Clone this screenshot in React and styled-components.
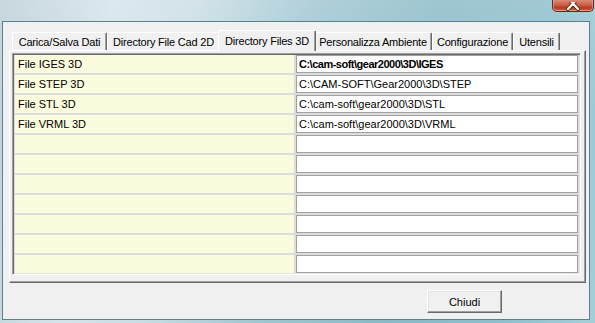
import React from 'react';
import styled, { createGlobalStyle } from 'styled-components';

const Global = createGlobalStyle`
  html, body { margin: 0; padding: 0; overflow: hidden; }
  body {
    font-family: "Liberation Sans", Arial, sans-serif;
    font-size: 11px;
    color: #000;
    background: #8fbfcc;
  }
`;

const Window = styled.div`
  width: 595px;
  height: 323px;
  box-sizing: border-box;
  display: flex;
  flex-direction: column;
  padding: 0 5px 3px 2px;
  background:
    linear-gradient(180deg, rgba(255,255,255,0.18) 0%, rgba(255,255,255,0) 40%),
    linear-gradient(100deg, #bccfd7 0%, #d4e3e9 18%, #c9dde4 30%, #9fc6d1 48%, #89b9c6 68%, #8cbecb 85%, #a4cfda 100%);
`;

const TitleBar = styled.div`
  height: 21px;
  flex: none;
  display: flex;
  justify-content: flex-end;
  align-items: flex-start;
  margin-right: -4px;
`;

const CloseButton = styled.div`
  width: 42px;
  height: 12px;
  box-sizing: border-box;
  border: 1px solid #5e2a22;
  border-top: none;
  border-radius: 0 0 5px 5px;
  background: linear-gradient(180deg, #d98b78 0%, #cc5f47 45%, #b93a20 70%, #c9603e 100%);
  box-shadow: inset 0 -1px 0 rgba(255,220,200,0.5), inset 1px 0 0 rgba(255,200,180,0.4), inset -1px 0 0 rgba(255,200,180,0.4);
  display: flex;
  justify-content: center;
  align-items: flex-end;
  overflow: hidden;
`;

const Client = styled.div`
  flex: 1;
  display: flex;
  flex-direction: column;
  border: 1px solid #5d7f8c;
  background: #f0f0f0;
  padding: 8px 3px 0 6px;
`;

const TabStrip = styled.div`
  display: flex;
  align-items: flex-end;
  height: 20px;
  padding-left: 3px;
  position: relative;
  z-index: 1;
`;

const Tab = styled.div`
  box-sizing: border-box;
  flex: none;
  width: ${p => p.$w}px;
  height: ${p => (p.$active ? '21px' : '18px')};
  margin: ${p => (p.$active ? '0 -2px -1px' : '0')};
  display: flex;
  align-items: center;
  justify-content: center;
  padding-top: ${p => (p.$active ? '0' : '1px')};
  background: #f0f0f0;
  border-top: 1px solid #fff;
  border-left: 1px solid #fff;
  border-right: 1px solid #696969;
  box-shadow: inset -1px 0 0 #a0a0a0;
  border-radius: 2px 2px 0 0;
  white-space: nowrap;
  letter-spacing: -0.2px;
  position: relative;
  z-index: ${p => (p.$active ? 2 : 0)};
`;

const Panel = styled.div`
  height: 233px;
  box-sizing: border-box;
  border-top: 1px solid #fff;
  border-left: 1px solid #fff;
  border-right: 1px solid #696969;
  border-bottom: 1px solid #696969;
  box-shadow: inset -1px -1px 0 #a0a0a0;
  padding: 2px 3px 6px 2px;
`;

const Grid = styled.div`
  display: grid;
  grid-template-columns: 280px 1fr;
  grid-auto-rows: 18px;
  gap: 2px;
  padding: 1px;
  border: 1px solid;
  border-color: #a0a0a0 #fff #fff #a0a0a0;
  box-shadow: inset 1px 1px 0 #696969, inset -1px -1px 0 #e3e3e3;
  background: #dcdcdc;
  margin-right: 1px;
`;

const LabelCell = styled.div`
  background: #fafadc;
  display: flex;
  align-items: center;
  padding-left: 3px;
  white-space: nowrap;
  margin-left: 1px;
`;

const PathCell = styled.div`
  background: #fff;
  border: 1px solid #a0a0a0;
  display: flex;
  align-items: center;
  padding-left: 2px;
  white-space: nowrap;
  font-weight: ${p => (p.$bold ? 700 : 400)};
  letter-spacing: ${p => (p.$bold ? '-0.5px' : '0')};
  margin-right: 1px;
`;

const ButtonRow = styled.div`
  display: flex;
  justify-content: flex-end;
  padding: 7px 84px 0 0;
`;

const Button = styled.button`
  width: 75px;
  height: 23px;
  box-sizing: border-box;
  font-family: "Liberation Sans", Arial, sans-serif;
  font-size: 11px;
  color: #000;
  background: #f0f0f0;
  border: 1px solid;
  border-color: #fff #696969 #696969 #fff;
  box-shadow: inset -1px -1px 0 #a0a0a0, inset 1px 1px 0 #e3e3e3;
  padding: 0;
`;

const tabs = [
  ['Carica/Salva Dati', 95],
  ['Directory File Cad 2D', 113],
  ['Directory Files 3D', 98],
  ['Personalizza Ambiente', 118],
  ['Configurazione', 81],
  ['Utensili', 47],
];

const rows = [
  ['File IGES 3D', 'C:\\cam-soft\\gear2000\\3D\\IGES', true],
  ['File STEP 3D', 'C:\\CAM-SOFT\\Gear2000\\3D\\STEP'],
  ['File STL 3D', 'C:\\cam-soft\\gear2000\\3D\\STL'],
  ['File VRML 3D', 'C:\\cam-soft\\gear2000\\3D\\VRML'],
  ['', ''], ['', ''], ['', ''], ['', ''], ['', ''], ['', ''], ['', ''],
];

export default function App() {
  return (
    <>
      <Global />
      <Window>
        <TitleBar>
          <CloseButton>
            <svg width="14" height="9" viewBox="0 0 14 9">
              <path d="M2 -4 L12 7 M12 -4 L2 7" stroke="#5a2418" strokeWidth="4" strokeLinecap="round" />
              <path d="M2 -4 L12 7 M12 -4 L2 7" stroke="#fff" strokeWidth="2.2" strokeLinecap="round" />
            </svg>
          </CloseButton>
        </TitleBar>
        <Client>
          <TabStrip>
            {tabs.map(([t, w], i) => (
              <Tab key={t} $w={w} $active={i === 2}>{t}</Tab>
            ))}
          </TabStrip>
          <Panel>
            <Grid>
              {rows.map(([label, path, bold], i) => (
                <React.Fragment key={i}>
                  <LabelCell>{label}</LabelCell>
                  <PathCell $bold={bold}>{path}</PathCell>
                </React.Fragment>
              ))}
            </Grid>
          </Panel>
          <ButtonRow>
            <Button>Chiudi</Button>
          </ButtonRow>
        </Client>
      </Window>
    </>
  );
}
